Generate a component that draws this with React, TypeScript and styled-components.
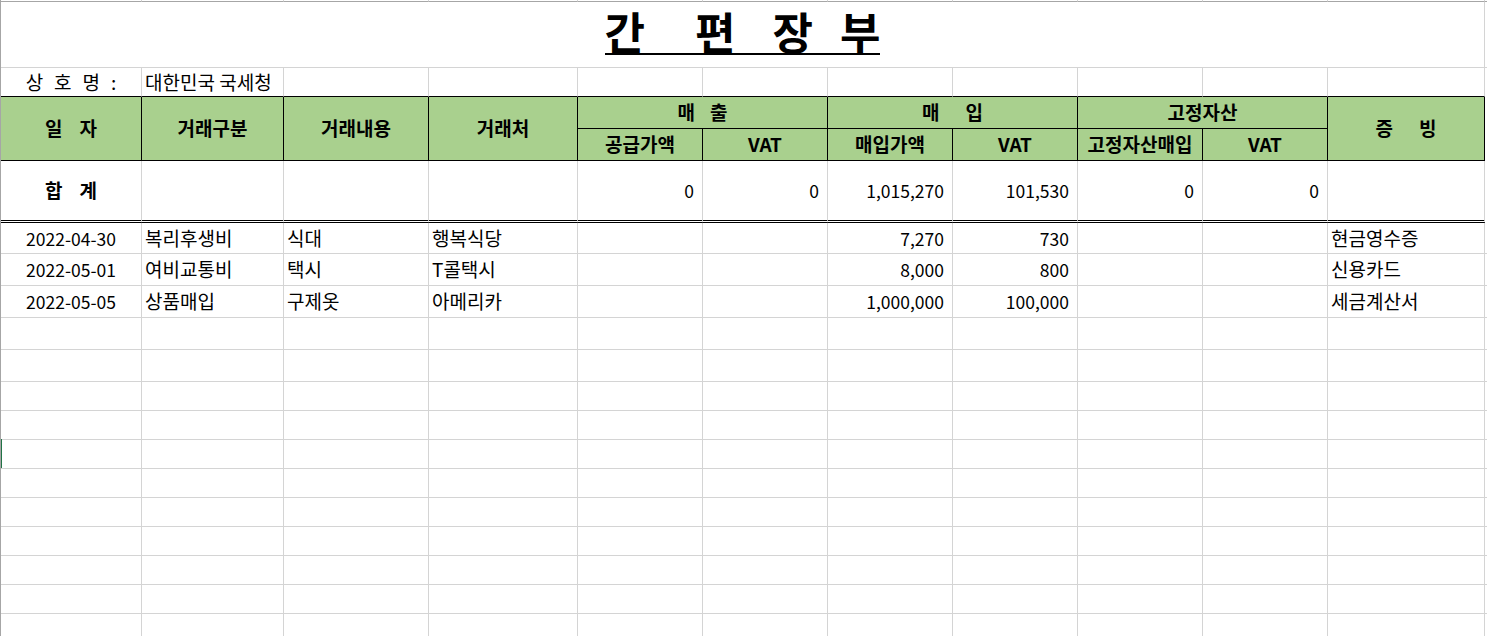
import { Fragment } from "react";
import styled, { createGlobalStyle } from "styled-components";

const GlobalStyle = createGlobalStyle`
  html, body {
    margin: 0;
    height: 100%;
    overflow: hidden;
    background: #ffffff;
  }
  body {
    font-family: "Noto Sans CJK KR", "Noto Sans", sans-serif;
    color: #000;
  }
`;

const GRID = "#d4d4d4";
const GREEN = "#a9d08e";

type Align = "left" | "center" | "right";
type Edge = "gray" | "black" | "double" | "dark" | "none";

const edge = (e: Edge) => {
  switch (e) {
    case "black":
      return "1px solid #000";
    case "double":
      return "3px double #000";
    case "dark":
      return "1px solid #a6a6a6";
    case "none":
      return "none";
    default:
      return `1px solid ${GRID}`;
  }
};

const Sheet = styled.div`
  position: relative;
  display: grid;
  grid-template-columns: 141px 142px 145px 149px repeat(6, 125px) 157px 1fr;
  grid-template-rows: 2px 66px 29px 32px 32px 62px 31px 32px 32px 32px 32px repeat(9, 29px);
  height: 100vh;
  overflow: hidden;
  border-left: 1px solid #a6a6a6;
`;

const Cell = styled.div<{
  $align?: Align;
  $right?: Edge;
  $bottom?: Edge;
  $span?: number;
  $rows?: number;
  $bg?: string;
  $bold?: boolean;
  $num?: boolean;
}>`
  box-sizing: border-box;
  display: flex;
  align-items: center;
  justify-content: ${(p) =>
    p.$align === "right" ? "flex-end" : p.$align === "center" ? "center" : "flex-start"};
  padding: ${(p) => (p.$align === "right" ? "0 8px 0 0" : p.$align === "left" ? "0 0 0 3px" : "0")};
  grid-column: ${(p) => (p.$span ? `span ${p.$span}` : "auto")};
  grid-row: ${(p) => (p.$rows ? `span ${p.$rows}` : "auto")};
  border-right: ${(p) => edge(p.$right ?? "gray")};
  border-bottom: ${(p) => edge(p.$bottom ?? "gray")};
  background: ${(p) => p.$bg ?? "transparent"};
  font-size: ${(p) => (p.$num ? "17.5px" : "19px")};
  font-weight: ${(p) => (p.$bold ? 700 : 400)};
  line-height: 1.2;
  white-space: nowrap;
  overflow: hidden;
`;

const TitleCell = styled(Cell)`
  align-items: flex-start;
  padding-top: 7px;
  overflow: visible;
`;

const TitleLine = styled.span`
  display: inline-flex;
  font-size: 44px;
  font-weight: 700;
  line-height: 1;
  border-bottom: 2px solid #000;
`;

const TitleChar = styled.span<{ $gap: number }>`
  margin-right: ${(p) => p.$gap}px;
`;

const Spread = styled.span<{ $gap: number }>`
  display: inline-flex;
  gap: ${(p) => p.$gap}px;
`;

const Marker = styled.div`
  position: absolute;
  left: -1px;
  top: 439px;
  width: 2px;
  height: 29px;
  background: #217346;
`;

const Spaced = ({ text, gap }: { text: string; gap: number }) => (
  <Spread $gap={gap}>
    {[...text].map((c, i) => (
      <span key={i}>{c}</span>
    ))}
  </Spread>
);

const aligns: Align[] = [
  "center", "left", "left", "left",
  "right", "right", "right", "right", "right", "right",
  "left",
];

// date and amount columns are figures, the rest Korean text
const isNum = (i: number) => i === 0 || (i >= 4 && i <= 9);

const entries = [
  ["2022-04-30", "복리후생비", "식대", "행복식당", "", "", "7,270", "730", "", "", "현금영수증"],
  ["2022-05-01", "여비교통비", "택시", "T콜택시", "", "", "8,000", "800", "", "", "신용카드"],
  ["2022-05-05", "상품매입", "구제옷", "아메리카", "", "", "1,000,000", "100,000", "", "", "세금계산서"],
];

const totals = ["", "", "", "0", "0", "1,015,270", "101,530", "0", "0", ""];

const title = [
  { c: "간", gap: 50 },
  { c: "편", gap: 37 },
  { c: "장", gap: 27 },
  { c: "부", gap: 0 },
];

const BLANK_ROWS = 11;

const App = () => {
  const hdr = { $bg: GREEN, $bold: true, $align: "center" as Align, $right: "black" as Edge, $bottom: "black" as Edge };

  return (
    <>
      <GlobalStyle />
      <Sheet>
        {/* top edge ticks */}
        {aligns.map((_, i) => (
          <Cell key={`t${i}`} $bottom="dark" />
        ))}
        <Cell $right="none" $bottom="dark" />

        {/* title */}
        <TitleCell $span={11} $align="center">
          <TitleLine>
            {title.map((t) => (
              <TitleChar key={t.c} $gap={t.gap}>
                {t.c}
              </TitleChar>
            ))}
          </TitleLine>
        </TitleCell>
        <Cell $right="none" />

        {/* company name */}
        <Cell $align="center" $bottom="black">
          <Spaced text="상호명:" gap={11} />
        </Cell>
        <Cell $align="left" $bottom="black">대한민국 국세청</Cell>
        {aligns.slice(2).map((_, i) => (
          <Cell key={`c${i}`} $bottom="black" />
        ))}
        <Cell $right="none" $bottom="none" />

        {/* header */}
        <Cell {...hdr} $rows={2}>
          <Spaced text="일자" gap={17} />
        </Cell>
        <Cell {...hdr} $rows={2}>거래구분</Cell>
        <Cell {...hdr} $rows={2}>거래내용</Cell>
        <Cell {...hdr} $rows={2}>거래처</Cell>
        <Cell {...hdr} $span={2}>
          <Spaced text="매출" gap={15} />
        </Cell>
        <Cell {...hdr} $span={2}>
          <Spaced text="매입" gap={26} />
        </Cell>
        <Cell {...hdr} $span={2}>고정자산</Cell>
        <Cell {...hdr} $rows={2}>
          <Spaced text="증빙" gap={26} />
        </Cell>
        <Cell $right="none" $bottom="none" />
        <Cell {...hdr}>공급가액</Cell>
        <Cell {...hdr}>VAT</Cell>
        <Cell {...hdr}>매입가액</Cell>
        <Cell {...hdr}>VAT</Cell>
        <Cell {...hdr}>고정자산매입</Cell>
        <Cell {...hdr}>VAT</Cell>
        <Cell $right="none" $bottom="none" />

        {/* totals */}
        <Cell $align="center" $bold $bottom="double">
          <Spaced text="합계" gap={17} />
        </Cell>
        {totals.map((v, i) => (
          <Cell key={`s${i}`} $align={aligns[i + 1]} $num={isNum(i + 1)} $bottom="double">
            {v}
          </Cell>
        ))}
        <Cell $right="none" $bottom="none" />

        {/* entries */}
        {entries.map((row, r) => (
          <Fragment key={`r${r}`}>
            {row.map((v, i) => (
              <Cell key={i} $align={aligns[i]} $num={isNum(i)}>
                {v}
              </Cell>
            ))}
            <Cell $right="none" />
          </Fragment>
        ))}

        {Array.from({ length: BLANK_ROWS }).map((_, r) => (
          <Fragment key={`b${r}`}>
            {aligns.map((_, i) => (
              <Cell key={i} />
            ))}
            <Cell $right="none" />
          </Fragment>
        ))}

        <Marker />
      </Sheet>
    </>
  );
};

export default App;
